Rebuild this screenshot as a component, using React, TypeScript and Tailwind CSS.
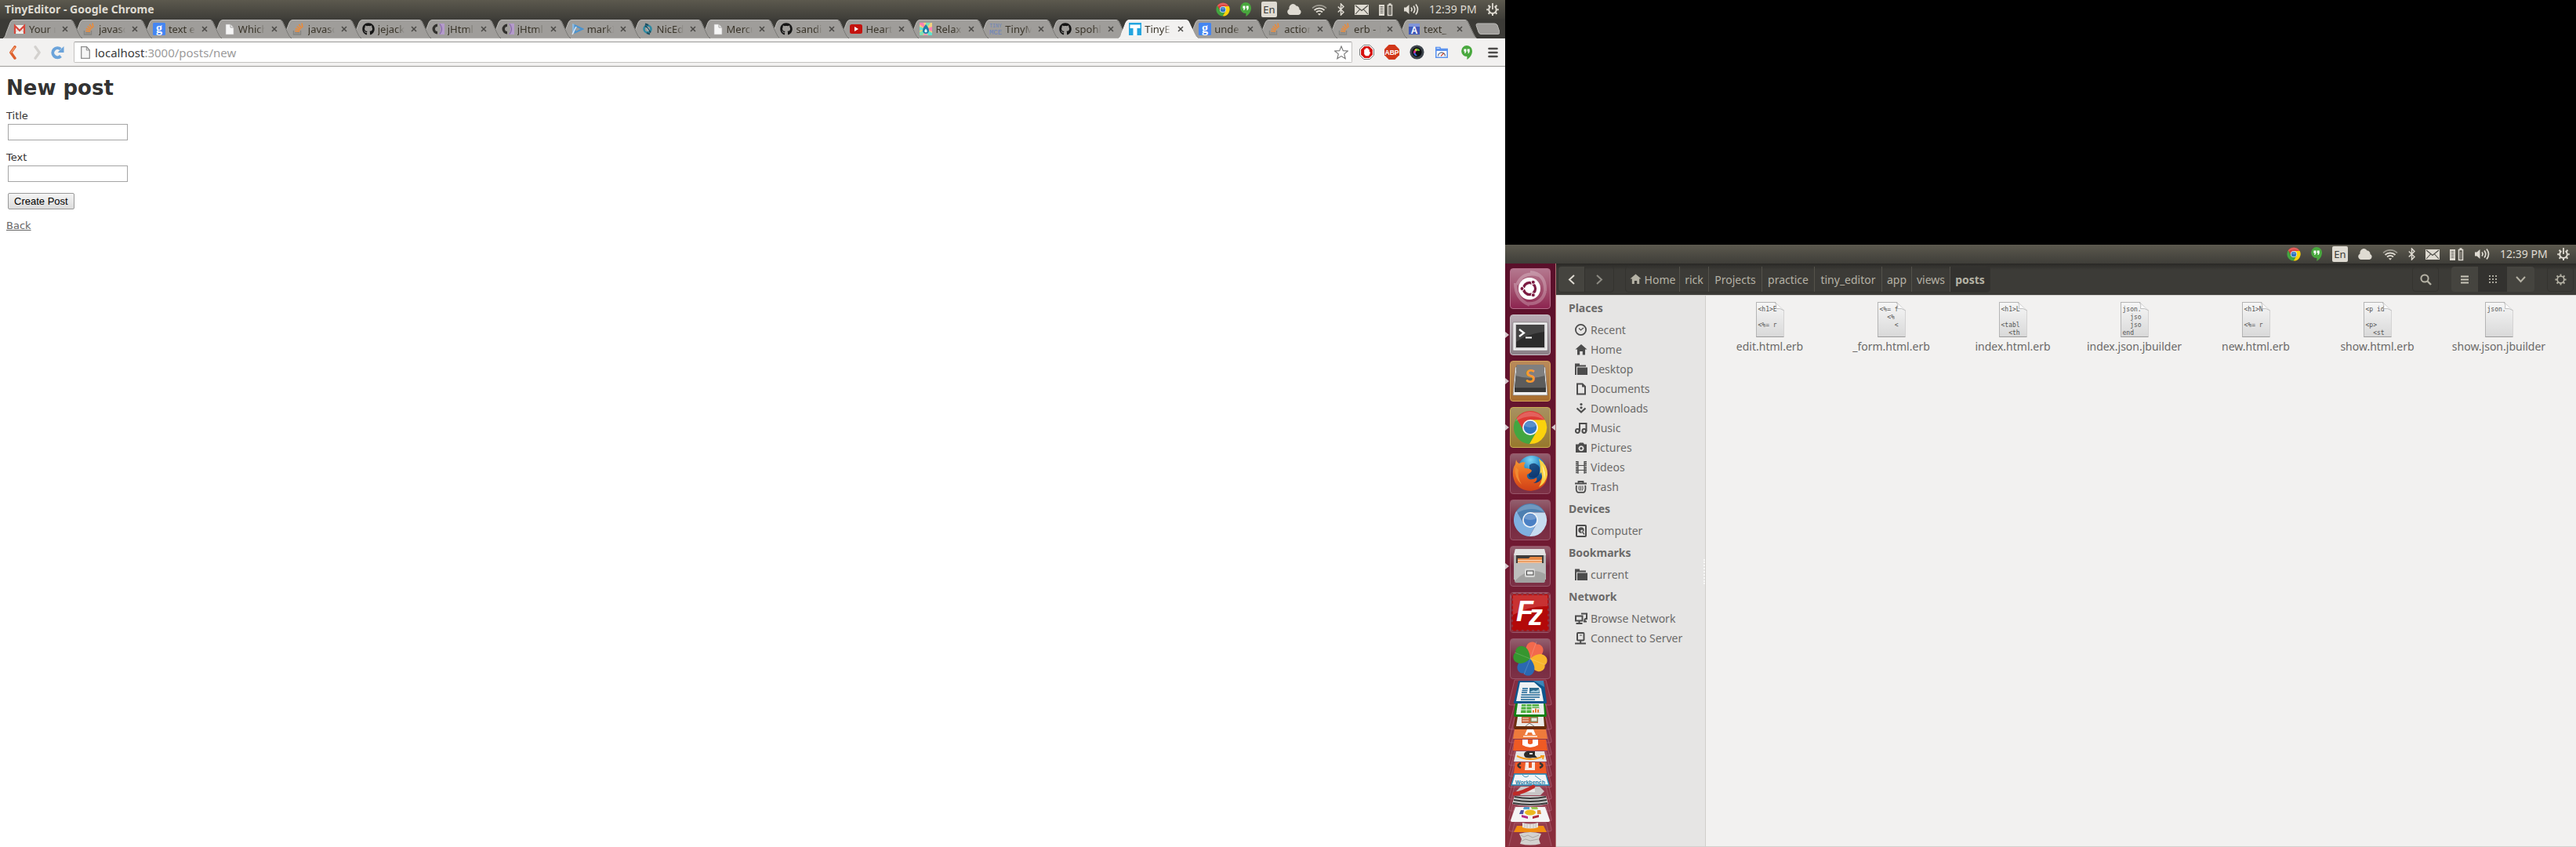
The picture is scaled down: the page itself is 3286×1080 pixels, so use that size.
import React from "react";
import { FaGithub } from "react-icons/fa";

type Kids = { children: React.ReactNode };

/* ---------- shared logos ---------- */

function ChromeLogo({ size, chromium = false }: { size: number; chromium?: boolean }) {
  const c = chromium
    ? { top: "#4d7fb0", right: "#c6dcf0", left: "#7fb0e0", dot: "#4a80c4" }
    : { top: "#dd3a35", right: "#fbd20c", left: "#43a640", dot: "#2f74c0" };
  return (
    <svg width={size} height={size} viewBox="1 1 46 46" aria-hidden="true">
      <path d="M5.55 12.02A22 22 0 0 1 43.6 14H24V24L15.34 29Z" fill={c.top} />
      <path d="M43.6 14A22 22 0 0 1 22.85 45.97L32.66 29L24 24V14Z" fill={c.right} />
      <path d="M22.85 45.97A22 22 0 0 1 5.55 12.02L15.34 29L24 24L32.66 29Z" fill={c.left} />
      <path d="M4 16A22 22 0 0 1 43 14Q24 4 4 16Z" fill="#fff" opacity=".2" />
      <circle cx="24" cy="24" r="10.4" fill="#eef3f8" />
      <circle cx="24" cy="24" r="8.6" fill={c.dot} />
      <path d="M16 22a8.4 8.4 0 0 1 16 0q-8 4-16 0Z" fill="#fff" opacity=".2" />
    </svg>
  );
}

function Hangouts({ h = 18 }: { h?: number }) {
  return (
    <svg width="14" height={h} viewBox="0 0 14 18" aria-hidden="true">
      <path d="M7 0a7 7 0 0 1 7 7c0 5-3 8.400-6.600 11V14.100A7 7 0 1 1 7 0Z" fill="#49a83e" />
      <path d="M3.400 4.600h3v3.200L5.200 10H4l.8-2.200H3.400ZM7.700 4.600h3v3.200L9.500 10H8.300l.8-2.200H7.700Z" fill="#fff" />
    </svg>
  );
}

/* ---------- desktop panel ---------- */

const cream = "#dfdbd2";

function Gear({ size, color }: { size: number; color: string }) {
  return (
    <svg width={size} height={size} viewBox="0 0 16 16" fill="none" stroke={color} aria-hidden="true">
      <circle cx="8" cy="8" r="4.600" strokeWidth="1.800" />
      <path
        d="M8 .5v2.500M8 13v2.500M.5 8H3M13 8h2.500M2.700 2.700l1.800 1.800M11.500 11.500l1.800 1.800M2.700 13.300l1.800-1.800M11.500 4.500l1.800-1.800"
        strokeWidth="2"
      />
    </svg>
  );
}

function Tray() {
  return (
    <div className="flex items-center gap-[13px] pr-2">
      <ChromeLogo size={18} />
      <Hangouts />
      <span className="flex h-5 w-5 items-center justify-center rounded-xs bg-[#dfdbd2] text-[13px] leading-none text-[#3c3b37]">
        En
      </span>
      <svg width="18" height="16" viewBox="0 0 18 16" fill={cream} aria-hidden="true">
        <path d="M4 15a4 4 0 0 1-1.500-7.600A5.500 5.500 0 0 1 7 1a4.500 4.500 0 0 1 4.500 2.600A4 4 0 0 1 15.500 8 3.700 3.700 0 0 1 14.500 15Z" />
      </svg>
      <svg width="20" height="16" viewBox="0 0 20 16" fill="none" stroke={cream} aria-hidden="true">
        <path d="M1 6.500a13 13 0 0 1 18 0" strokeWidth="1.600" opacity=".55" />
        <path d="M3.500 9a9.500 9.500 0 0 1 13 0" strokeWidth="1.900" />
        <path d="M6 11.500a6 6 0 0 1 8 0" strokeWidth="1.900" />
        <path d="M7.800 13.200h4.400l-2.200 2.500Z" fill={cream} stroke="none" />
      </svg>
      <svg width="9" height="16" viewBox="0 0 9 16" fill="none" stroke={cream} strokeWidth="1.500" aria-hidden="true">
        <path d="M.8 4.500l7.200 7L4.500 15V1L8 4.500l-7.200 7" />
      </svg>
      <svg width="18" height="13" viewBox="0 0 18 13" aria-hidden="true">
        <path d="M0 0h18v13H0Z" fill={cream} />
        <path d="M1 1l8 6.500L17 1M1 12l5.500-6M17 12l-5.500-6" fill="none" stroke="#4a4944" strokeWidth="1.100" />
      </svg>
      <svg width="18" height="17" viewBox="0 0 18 17" aria-hidden="true">
        <path d="M0 2h7v14H0Z" fill={cream} />
        <path d="M2 4v10M3.500 4v10M5 4v10" stroke="#4a4944" strokeDasharray="1 1" />
        <path d="M11.500 2.500h5v13h-5ZM12.500 1h3" fill="none" stroke={cream} strokeWidth="1.500" />
        <path d="M12.800 5h2.400v9h-2.400Z" fill={cream} opacity=".35" />
      </svg>
      <svg width="20" height="16" viewBox="0 0 20 16" fill="none" stroke={cream} strokeWidth="1.700" aria-hidden="true">
        <path d="M1 5.500h2.500L7.500 2v12l-4-3.500H1Z" fill={cream} stroke="none" />
        <path d="M10 5.500q2 2.500 0 5M13 3.500q3.500 4.500 0 9M16 1.500q5 6.500 0 13" />
      </svg>
      <span className="w-[60px] text-[14px] leading-none whitespace-nowrap">12:39 PM</span>
      <svg width="16" height="16" viewBox="0 0 16 16" fill="none" stroke={cream} aria-hidden="true">
        <path d="M5.500 4.200a4.800 4.800 0 1 0 5 0" strokeWidth="2" />
        <path d="M8 0v8" strokeWidth="1.800" />
        <path d="M.2 8.300h2.500M13.300 8.300h2.500M2.500 2.800l1.700 1.700M11.800 4.500l1.700-1.700M2.600 13.700l1.700-1.700M11.700 12l1.700 1.700M8 13.500V16" strokeWidth="2" />
      </svg>
    </div>
  );
}

function Panel({ title }: { title?: string }) {
  return (
    <div className="flex h-6 shrink-0 items-center justify-between bg-linear-to-b from-[#5c594e] to-[#3f3e39] text-[#dfdbd2]">
      <span className="pl-1.5 text-[14px] leading-none font-bold">{title}</span>
      <Tray />
    </div>
  );
}

/* ---------- browser favicons ---------- */

function Fav({ children }: Kids) {
  return (
    <svg width="16" height="16" viewBox="0 0 16 16" className="shrink-0" aria-hidden="true">
      {children}
    </svg>
  );
}

const favicons = {
  gmail: (
    <Fav>
      <path d="M1 3h14v11H1Z" fill="#f1eeea" />
      <path d="M1 14l5-5.500M15 14l-5-5.500" stroke="#cfc9c2" />
      <path d="M2 14V4l6 6 6-6v10" fill="none" stroke="#d8473b" strokeWidth="2.200" />
    </Fav>
  ),
  stack: (
    <Fav>
      <path d="M1.500 10v5h9v-5" fill="none" stroke="#858480" strokeWidth="1.400" />
      <path d="M3 12.800h6" stroke="#858480" strokeWidth="1.300" />
      <path d="M3.200 10.500l6 .6M3.800 7.500l5.800 1.800M5.600 4.500l4.900 3.600M8.200 2l3.600 5M12 .5l1 5.500" stroke="#ee8a35" strokeWidth="1.500" />
    </Fav>
  ),
  google: (
    <Fav>
      <rect width="16" height="16" rx="1.500" fill="#4586f2" />
      <text x="8" y="12" textAnchor="middle" fontSize="16" fontWeight="700" fontFamily="Liberation Serif, serif" fill="#fff">g</text>
    </Fav>
  ),
  file: (
    <Fav>
      <path d="M4 2h6l4 4v9H4Z" fill="#f6f6f6" stroke="#b5b4b2" strokeWidth=".6" />
      <path d="M10 2v4h4" fill="none" stroke="#a3a2a0" />
    </Fav>
  ),
  github: <FaGithub size={16} color="#161616" className="shrink-0" aria-hidden="true" />,
  jhtml: (
    <Fav>
      <path d="M7 1.500v3.500a3 3 0 0 0 0 6v3.500a6.500 6.500 0 0 1 0-13Z" fill="#33322f" />
      <path d="M9 1h7v14H9q4-7 0-14Z" fill="#b49acb" />
      <path d="M10 1.500q5 6.500 0 13" fill="none" stroke="#7d5f9e" />
    </Fav>
  ),
  mark: (
    <Fav>
      <path d="M1 1l3 1v10l-3 3Z" fill="#8fb8dc" />
      <path d="M4.500 3.500L14 8l-9.500 4.500Z" fill="none" stroke="#4a93cf" strokeWidth="2" />
      <path d="M1 15L6 5" stroke="#d8e7f4" strokeWidth="1.500" />
    </Fav>
  ),
  nic: (
    <Fav>
      <circle cx="8" cy="8" r="4.500" fill="none" stroke="#2c8aa3" strokeWidth="2.500" />
      <path d="M5 3.500l7 9M5 1.500l4 1.500M11 14.500l-4-1.500" stroke="#1c4d60" strokeWidth="2" />
      <path d="M6.500 6.500l3 4" stroke="#d6eef3" />
    </Fav>
  ),
  youtube: (
    <Fav>
      <rect y="2" width="16" height="12" rx="2.500" fill="#c4130f" />
      <path d="M6 5v6l5-3Z" fill="#fff" />
    </Fav>
  ),
  relax: (
    <Fav>
      <path d="M0 0h16v16H0Z" fill="#f3d17c" />
      <path d="M8 8L0 2V0h5ZM8 8l8-3v6Z" fill="#ff7fb0" />
      <path d="M8 8V0h6ZM8 8L4 16H0v-4Z" fill="#7fe0b4" />
      <path d="M8 8L0 5v5ZM8 8l8 5v3h-5Z" fill="#5fe3d2" />
      <path d="M8 8l2 8H5Z" fill="#ff9ac0" />
      <path d="M8 2q-5 6-4 9 1 3 4 3t4-3q1-3-4-9Z" fill="#1e7fa8" />
      <path d="M8 7.500q-2.500 3-1.300 4.200 1.300 1 2.600 0Q10.500 10.500 8 7.500Z" fill="#e8fbff" />
    </Fav>
  ),
  mce: (
    <Fav>
      <g fontFamily="Liberation Mono, monospace" textAnchor="middle" fill="#6c84be">
        <text x="8" y="6" fontSize="6.500">TINY</text>
        <text x="8" y="14.500" fontSize="9">MCE</text>
      </g>
    </Fav>
  ),
  tiny: (
    <Fav>
      <path d="M0 0h16v16H0Z" fill="#25a5df" />
      <path d="M1.500 2.500h13V7h-4v9h-5V7h-4Z" fill="#fff" />
    </Fav>
  ),
  api: (
    <Fav>
      <path d="M1 1h14v14H1Z" fill="#4058b8" />
      <path d="M1 1h14v4H1Z" fill="#8094d8" />
      <text x="8" y="13.500" textAnchor="middle" fontSize="12" fontWeight="700" fontFamily="Liberation Sans, sans-serif" fill="#fff">A</text>
    </Fav>
  ),
};

const tabs: [keyof typeof favicons, string][] = [
  ["gmail", "Your n"], ["stack", "javasc"], ["google", "text e"], ["file", "Which"], ["stack", "javasc"],
  ["github", "jejack"], ["jhtml", "jHtml"], ["jhtml", "jHtml"], ["mark", "markI"], ["nic", "NicEd"],
  ["file", "Mercu"], ["github", "sandi"], ["youtube", "Heart"], ["relax", "Relax"], ["mce", "TinyM"],
  ["github", "spohl"], ["tiny", "TinyE"], ["google", "unde"], ["stack", "action"], ["stack", "erb - H"], ["api", "text_"],
];
const activeTab = 16;

function Tab({ icon, label, index }: { icon: keyof typeof favicons; label: string; index: number }) {
  const active = index === activeTab;
  return (
    <div className="relative h-6 min-w-0 flex-1" style={{ zIndex: active ? 40 : 30 - index }}>
      <svg className="absolute top-0 left-0 h-6 w-[calc(100%+12px)]" viewBox="0 0 101 24" preserveAspectRatio="none" aria-hidden="true">
        <path
          d="M0 24C3 22 3 20 4 17L9 4Q10.500 .5 13 .5H86Q89 .5 90 4L96 17Q98 22 101 24Z"
          fill={active ? "#f2f1f0" : "#9f9d9a"}
          stroke={active ? "#f8f8f8" : "#c0bfbc"}
        />
        {!active && <path d="M87 .8Q89 1 90 4L96 17Q98 22 101 24" fill="none" stroke="#6d6c69" />}
      </svg>
      <div className="relative flex h-full items-center pr-1.5 pl-[13px]">
        {favicons[icon]}
        <span className="ml-1 min-w-0 flex-1 overflow-hidden text-[13px] leading-5 whitespace-nowrap text-[#3a352a] [mask-image:linear-gradient(to_right,black_70%,transparent)]">
          {label}
        </span>
        <button type="button" aria-label={`Close ${label}`} className="ml-2 shrink-0">
          <svg width="8" height="8" viewBox="0 0 8 8" fill="none" stroke="#4a4946" strokeWidth="1.500" aria-hidden="true">
            <path d="M1 1l6 6M7 1l-6 6" />
          </svg>
        </button>
      </div>
    </div>
  );
}

function ToolButton({ label, children }: { label: string } & Kids) {
  return (
    <button type="button" aria-label={label} className="flex h-7 w-8 shrink-0 items-center justify-center">
      {children}
    </button>
  );
}

function Toolbar() {
  return (
    <div className="flex h-9 items-center border-b border-[#9d9c9a] bg-[#f2f1f0]">
      <ToolButton label="Back">
        <svg width="10" height="18" viewBox="0 0 10 18" aria-hidden="true">
          <path d="M8 1.800L2.800 9 8 16.200" fill="none" stroke="#dd5f2c" strokeWidth="3.400" strokeLinecap="round" strokeLinejoin="round" />
          <path d="M7.600 2.500L3 9" fill="none" stroke="#f3a070" strokeWidth="1.300" strokeLinecap="round" />
        </svg>
      </ToolButton>
      <ToolButton label="Forward">
        <svg width="10" height="18" viewBox="0 0 10 18" aria-hidden="true">
          <path d="M2 1.800L7.200 9 2 16.200" fill="none" stroke="#d3d1ce" strokeWidth="3.200" strokeLinecap="round" strokeLinejoin="round" />
        </svg>
      </ToolButton>
      <button type="button" aria-label="Reload" className="flex h-7 w-[30px] shrink-0 items-center justify-end pr-3">
        <svg width="17" height="18" viewBox="0 0 17 18" className="shrink-0" aria-hidden="true">
          <path d="M12.500 13.500A6 6 0 1 1 12.300 4.700" fill="none" stroke="#6ba3da" strokeWidth="4" />
          <path d="M16.500 1v8H8.500Z" fill="#6ba3da" />
        </svg>
      </button>
      <div className="flex h-[27px] min-w-0 flex-1 items-center rounded-xs border border-[#c4c2c0] border-t-[#9b9a98] bg-white pr-1 pl-2">
        <svg width="12" height="16" viewBox="0 0 12 16" className="shrink-0" aria-hidden="true">
          <path d="M.7.7h6.800L11.300 5v10.300H.7Z" fill="#f6f6f6" stroke="#8f8f8f" strokeWidth="1.300" />
          <path d="M7.300.7V5h4" fill="none" stroke="#8f8f8f" />
        </svg>
        <div className="ml-1.5 flex-1 text-[15px] leading-6 text-[#9b9b9b]">
          <span className="text-[#3a3a3a]">localhost</span>:3000/posts/new
        </div>
        <button type="button" aria-label="Bookmark this page">
          <svg width="18" height="18" viewBox="0 0 18 18" aria-hidden="true">
            <path d="M9 1l2.300 5.600 6 .4-4.600 3.900 1.500 5.900L9 13.600l-5.200 3.200 1.500-5.900L.7 7l6-.4Z" fill="#fff" stroke="#777" strokeWidth="1.100" />
          </svg>
        </button>
      </div>
      <div className="flex shrink-0 items-center pl-0.5">
        <ToolButton label="AdBlock">
          <svg width="19" height="19" viewBox="0 0 20 20" aria-hidden="true">
            <path d="M6 .5h8L19.500 6v8L14 19.500H6L.5 14V6Z" fill="#fff" stroke="#6e6e6e" />
            <path d="M6.700 2.200h6.600l4.500 4.500v6.600l-4.500 4.500H6.700l-4.500-4.500V6.700Z" fill="#d5110e" />
            <path d="M6.500 9.500V6.500h1.400V5h1.500V4.500h1.500V5h1.300v1.500h1.300V10l1-.5v2L12.500 15h-4L6.500 12.500Z" fill="#fff" />
          </svg>
        </ToolButton>
        <ToolButton label="Adblock Plus">
          <svg width="19" height="19" viewBox="0 0 20 20" aria-hidden="true">
            <path d="M6 0h8l6 6v8l-6 6H6l-6-6V6Z" fill="#d13719" />
            <text x="10" y="13.300" textAnchor="middle" fontSize="9" fontWeight="700" fontFamily="Liberation Sans, sans-serif" fill="#fff">ABP</text>
          </svg>
        </ToolButton>
        <ToolButton label="Screen capture">
          <svg width="19" height="19" viewBox="0 0 20 20" aria-hidden="true">
            <circle cx="10" cy="10" r="9.500" fill="#3c434b" />
            <circle cx="10" cy="10" r="6.500" fill="#0b0d12" />
            <path d="M10 10L6.500 7A5 5 0 0 1 10 5Z" fill="#e2d338" />
            <path d="M10 10V5a5 5 0 0 1 4 2.500Z" fill="#63c437" />
            <path d="M10 10L6.500 7a5 5 0 0 0-1 5Z" fill="#d92f8b" />
            <path d="M10 10l-4.500 2a5 5 0 0 0 4.500 3Z" fill="#3468e0" />
            <circle cx="11" cy="11" r="2.800" fill="#111" />
          </svg>
        </ToolButton>
        <ToolButton label="Speed test">
          <svg width="16" height="15" viewBox="0 0 16 15" aria-hidden="true">
            <path d="M.8 1.500h5l1 2h8.400v10.700H.8Z" fill="#fff" stroke="#5c93ee" strokeWidth="1.600" />
            <path d="M1 3h14v3H1Z" fill="#5c93ee" />
            <path d="M3.500 12.500a4.500 4.500 0 0 1 9 0" fill="none" stroke="#6b7a90" strokeWidth="1.400" />
            <path d="M7 12.500l4-4" stroke="#cc4b3b" strokeWidth="1.300" />
          </svg>
        </ToolButton>
        <ToolButton label="Hangouts">
          <Hangouts />
        </ToolButton>
      </div>
      <button type="button" aria-label="Menu" className="mr-[9px] ml-[11px] shrink-0">
        <svg width="13" height="14" viewBox="0 0 13 14" stroke="#4c4b49" strokeWidth="2.600" strokeLinecap="round" aria-hidden="true">
          <path d="M1.500 2h10M1.500 7h10M1.500 12h10" />
        </svg>
      </button>
    </div>
  );
}

function Browser() {
  return (
    <section className="flex min-w-0 flex-col bg-white">
      <Panel title="TinyEditor - Google Chrome" />
      <div className="isolate flex h-[25px] items-end bg-[#3c3b37] pl-1">
        {tabs.map(([icon, label], i) => (
          <Tab key={i} icon={icon} label={label} index={i} />
        ))}
        <button type="button" aria-label="New tab" className="mr-[7px] ml-2.5 flex h-full shrink-0 items-center">
          <svg width="31" height="16" viewBox="0 0 31 16" aria-hidden="true">
            <path d="M3 1h21q3 0 4 2l3 9q0 2.500-2 2.500H7q-2 0-3-2.500L1 3Q1 1 3 1Z" fill="#9f9d9a" stroke="#bab9b6" />
          </svg>
        </button>
      </div>
      <Toolbar />
      <main className="px-2 font-['DejaVu_Sans',sans-serif] text-[13px] leading-[18px] text-[#333]">
        <h1 className="my-[18px] text-[26px] leading-[18px] font-bold">New post</h1>
        <form onSubmit={(e) => e.preventDefault()}>
          <div className="flex flex-col items-start">
            <label htmlFor="post-title">Title</label>
            <input id="post-title" type="text" className="mt-px ml-0.5 h-[21px] w-[153px] border border-[#a5a5a5] bg-white px-0.5" />
          </div>
          <div className="mt-[13px] flex flex-col items-start">
            <label htmlFor="post-text">Text</label>
            <input id="post-text" type="text" className="mt-px ml-0.5 h-[21px] w-[153px] border border-[#a5a5a5] bg-white px-0.5" />
          </div>
          <button
            type="submit"
            className="mt-3.5 ml-0.5 h-[21px] rounded-xs border border-[#999] bg-linear-to-b from-[#f4f4f4] to-[#dcdcdc] px-[7px] font-['Liberation_Sans',sans-serif] text-[13px] leading-[17px] text-black"
          >
            Create Post
          </button>
        </form>
        <a href="#back" className="mt-3 inline-block text-[#666] underline">Back</a>
      </main>
    </section>
  );
}

/* ---------- launcher ---------- */

const tileTints = {
  bfb: "from-[#b4788f] to-[#8d2450] border-[#b86f8c]",
  grey: "from-[#b9adb5] to-[#8b8087] border-[#c8bfc5]",
  amber: "from-[#b98a5a] to-[#a96e2e] border-[#d3a35a]",
  gold: "from-[#a89160] to-[#97792c] border-[#c9ad54]",
  wine: "from-[#93606f] via-[#74273f] to-[#7d3146] border-[#99566a]",
};

function Tile({ label, tint, running, focused, children }: { label: string; tint: keyof typeof tileTints; running?: boolean; focused?: boolean } & Kids) {
  return (
    <div className="relative flex w-full justify-center">
      {running && (
        <svg width="5" height="8" viewBox="0 0 5 8" className="absolute top-[22px] left-0" aria-hidden="true">
          <path d="M0 0l5 4-5 4Z" fill="#d6c8cd" />
        </svg>
      )}
      <button type="button" aria-label={label} className={`flex h-[52px] w-[52px] items-center justify-center rounded-sm border bg-linear-to-b ${tileTints[tint]}`}>
        {children}
      </button>
      {focused && (
        <svg width="5" height="8" viewBox="0 0 5 8" className="absolute top-[22px] right-0" aria-hidden="true">
          <path d="M5 0L0 4l5 4Z" fill="#d6c8cd" />
        </svg>
      )}
    </div>
  );
}

function Art({ children }: Kids) {
  return (
    <svg width="50" height="50" viewBox="0 0 50 50" aria-hidden="true">
      {children}
    </svg>
  );
}

const petal = "M0 0C-8 -4 -12 -9 -11 -15C-10 -21 -3 -23 0 -20C3 -23 10 -21 11 -15C12 -9 8 -4 0 0Z";

function FoldedIcons() {
  const glass = [0, 31, 48, 64, 77, 91, 105, 120, 135, 148, 161, 182];
  return (
    <svg width="64" height="213" viewBox="0 0 64 213" className="shrink-0" aria-label="More applications" role="img">
      {glass.map((y) => (
        <path key={y} d={`M12 ${y + 1}H52L59 ${y + 30}Q60 ${y + 33} 57 ${y + 33}H7Q4 ${y + 33} 5 ${y + 30}Z`} fill="#a8566a" fillOpacity=".22" stroke="#b97688" strokeOpacity=".5" />
      ))}
      <path d="M17 2h24l9 4 3 24q0 1-2 1H13q-2 0-2-1Z" fill="#0e568c" />
      <path d="M19 4h18l9 8 3 16H14Z" fill="#eef1f3" />
      <path d="M36 2h13l1 8Z" fill="#3b86b8" />
      <path d="M22 12h7M21.500 14.500h7M21 17h7M20.500 20h24M20 23h24M20 26h18" stroke="#1a6495" strokeWidth="1.300" />
      <path d="M31 11h12l1 7H31Z" fill="#2c6a8d" />
      <path d="M32 16l4-2 3 1 4-2v4H32Z" fill="#9bc4d8" />
      <path d="M13 31h38l2 15q0 2-2 2H13q-2 0-2-2Z" fill="#138013" />
      <path d="M16 31h33l1 14H14Z" fill="#eef1ee" />
      <path d="M21 32h22l1 11H20Z" fill="#4caf3d" />
      <path d="M20 35h24M20 39h24M27 31v13M34 31v13" stroke="#e7f4e4" />
      <path d="M34 37h10v6H34Z" fill="#fff" stroke="#bbb" strokeWidth=".5" />
      <path d="M36 42.500v-3M39 42.500v-5M42 42.500v-4" stroke="#e0762b" strokeWidth="2" />
      <path d="M13 48h38l2 13q0 3-2 3H13q-2 0-2-3Z" fill="#6b2c0c" />
      <path d="M16 48h33l1 12H14Z" fill="#eceae8" />
      <path d="M21 48h21v8H21Z" fill="#c7643c" />
      <path d="M22 50h8M22 53h8" stroke="#f4d9cc" />
      <path d="M33 49h8v5h-8Z" fill="#e9e6df" stroke="#6d8b52" />
      <path d="M31 56l-5 4M31 56l6 4" stroke="#777" />
      <path d="M12 64h40l2 12H10Z" fill="#ee7a3c" />
      <path d="M25 71l3-7h8l3 7h-4l-1-3h-5l-1 3Z" fill="#fff" />
      <path d="M23 72h18v2H23Z" fill="#fbd5bf" />
      <path d="M12 77h40l2 14H10Z" fill="#ef5a24" />
      <path d="M22 77h7v5q3 2 6 0v-5h7v7q-10 6-20 0Z" fill="#fff" />
      <path d="M14 92h36l3 13H11Z" fill="#e6e5e4" />
      <path d="M24 96q1-5 8-4h6v5l3 3h-6q-11 2-11-4Z" fill="#2b2a2a" />
      <path d="M31 94h4v2h-4Z" fill="#e6e5e4" />
      <path d="M15 98q17 8 34 0M45 98h4l-1 4" fill="none" stroke="#f69a1c" strokeWidth="2" />
      <path d="M13 106h38l2 14H11Z" fill="#ee5a26" />
      <path d="M26 106h12v10H25Z" fill="#f8e9e2" />
      <path d="M30 106h4v7h-4Z" fill="#e8551f" />
      <path d="M20 107q-7 3 0 6M44 107q7 3 0 6" stroke="#333" strokeWidth="2.500" fill="none" />
      <path d="M12 121h40l4 14H8Z" fill="#f2f4f6" stroke="#2289b6" strokeWidth="1.500" />
      <path d="M22 122q4 5 8 1M38 123l8 6" stroke="#4793b5" fill="none" />
      <text x="32" y="134" textAnchor="middle" fontSize="7" fontWeight="700" fontFamily="Liberation Sans, sans-serif" fill="#267ea6">Workbench</text>
      <path d="M20 137h24l6 6-5 5H20l-6-5Z" fill="#c8c6c6" />
      <path d="M24 140h14v4H24Z" fill="#e7e6e6" />
      <path d="M12 146q10-1 24-9" stroke="#c02a26" strokeWidth="4.500" strokeLinecap="round" fill="none" />
      <path d="M12 149h40l3 10q-23 6-46 0Z" fill="#c9c9c8" />
      <path d="M12 150q20 4 40 0M11 154q21 4 42 0M10 158q22 4 44 0" stroke="#3a3a3a" strokeWidth="2" fill="none" />
      <path d="M13 163h38l6 17q0 2-3 2H9q-2 0-2-2Z" fill="#f4f4f4" />
      <ellipse cx="32" cy="170" rx="7" ry="3.500" fill="#ecb91f" />
      <path d="M24 163h7v3h-8Z" fill="#4fa3cf" />
      <path d="M33 163h8l1 3h-8Z" fill="#9bcb52" />
      <path d="M20 167h4l-1 5h-5Z" fill="#4e51a3" />
      <path d="M41 167h4l1 5h-5Z" fill="#dd8a3a" />
      <path d="M21 173l8 2v3l-8-2Z" fill="#b72b87" />
      <path d="M43 173l-8 2v3l8-2Z" fill="#b02a3b" />
      <path d="M15 187h34l4 8H11Z" fill="#f08c10" />
      <path d="M22 183q10 3 20 0v6q-10 3-20 0Z" fill="#e4e1dd" />
      <path d="M25 184v5M28 185v5M32 185v5M36 185v5M39 184v5" stroke="#b9b5b0" strokeWidth=".8" />
      <path d="M18 197q14-4 28 0l-3 7 2 6q-13 3-26 0l2-6Z" fill="#d4d2cf" />
      <path d="M20 199l4 2 5-2 6 3 8-3M20 207l6-3 6 2 10-2" stroke="#aaa7a3" fill="none" />
    </svg>
  );
}

function Launcher() {
  return (
    <nav aria-label="Launcher" className="flex w-[65px] shrink-0 flex-col gap-[7px] overflow-hidden border-r border-[#b07070] bg-linear-to-b from-[#5a0f2a] via-[#711a32] to-[#8a2e3c] pt-1.5">
      <Tile label="Search" tint="bfb">
        <Art>
          <path d="M25 4Q45 6 44 28M44 28Q40 46 20 44M6 18Q6 38 24 46M8 20Q16 2 36 8" fill="none" stroke="#fff" strokeOpacity=".25" strokeWidth="4" />
          <circle cx="24" cy="25" r="14" fill="#fff" />
          <circle cx="24" cy="25" r="7.500" fill="none" stroke="#7c1b42" strokeWidth="3.400" />
          <path d="M24 25H12M24 25l6-10.400M24 25l6 10.400" stroke="#fff" strokeWidth="1.300" />
          <circle cx="24" cy="25" r="5.600" fill="#fff" />
          <g fill="#7c1b42" stroke="#fff" strokeWidth="1">
            <circle cx="14.500" cy="25" r="2.500" />
            <circle cx="28.800" cy="16.800" r="2.500" />
            <circle cx="28.800" cy="33.200" r="2.500" />
          </g>
        </Art>
      </Tile>
      <Tile label="Terminal" tint="grey" running>
        <Art>
          <path d="M3 9h44v36H3Z" fill="#c9c7c9" stroke="#8a8689" />
          <path d="M4.500 10.500h41v33h-41Z" fill="none" stroke="#f1f1f1" strokeWidth="2" />
          <path d="M7 12h36v29H7Z" fill="#2b2b2b" />
          <path d="M7 12h36v9Q20 24 7 34Z" fill="#555" opacity=".6" />
          <path d="M11 18l6 4.500-6 4.500" fill="none" stroke="#fff" strokeWidth="2.200" />
          <path d="M19 28.500h8" stroke="#fff" strokeWidth="2" />
        </Art>
      </Tile>
      <Tile label="Sublime Text" tint="amber" running>
        <Art>
          <path d="M6 7h38l3 36H3Z" fill="#f0f0f0" stroke="#777" strokeWidth=".6" />
          <path d="M8 4h34l3 30v5H5v-5Z" fill="#383838" />
          <path d="M8 4h34l3 30H5Z" fill="#5c5c5c" />
          <path d="M8 4h34l1.500 14Q25 24 6.500 18Z" fill="#8e8e8e" opacity=".7" />
          <path d="M5 34h40" stroke="#2e2e2e" />
          <text x="25" y="27" textAnchor="middle" fontSize="23" fontWeight="700" fontFamily="Lato, sans-serif" fill="#f99a2d">S</text>
        </Art>
      </Tile>
      <Tile label="Google Chrome" tint="gold" running focused>
        <ChromeLogo size={44} />
      </Tile>
      <Tile label="Firefox" tint="wine">
        <Art>
          <defs>
            <linearGradient id="fox" x1="0" y1="0" x2="0" y2="1">
              <stop offset="0" stopColor="#f39a34" />
              <stop offset=".5" stopColor="#e7641f" />
              <stop offset="1" stopColor="#cf4018" />
            </linearGradient>
            <radialGradient id="globe" cx=".45" cy=".15" r=".9">
              <stop offset="0" stopColor="#7fd6f5" />
              <stop offset=".4" stopColor="#2a8cc9" />
              <stop offset="1" stopColor="#0a2a66" />
            </radialGradient>
          </defs>
          <circle cx="27" cy="20" r="18" fill="url(#globe)" />
          <path d="M24 14q5-4 9-1 6 3 4 11-3 8-12 6-4-3-1-8Z" fill="#0b2a60" opacity=".7" />
          <path d="M7 7Q8 11 11 12Q15 9 19 11Q16 14 18 18Q25 18 27 21Q26 24 21 26Q20 30 24 32Q29 33 33 30Q35 34 29 37Q38 37 41 28Q43 18 37 8Q46 14 47 25Q47 44 26 47Q6 46 3 28Q2 18 6 13Z" fill="url(#fox)" />
          <path d="M36 6Q47 13 47 26Q45 37 36 42Q42 32 39 23L37 26Q39 15 36 6Z" fill="#fbd045" />
          <path d="M40 14Q45 22 43 32Q42 21 40 14Z" fill="#fff6b8" />
          <path d="M6 16Q4 30 14 39Q8 28 10 20Q8 18 6 16Z" fill="#f08a32" />
        </Art>
      </Tile>
      <Tile label="Chromium" tint="wine">
        <ChromeLogo size={44} chromium />
      </Tile>
      <Tile label="Files" tint="wine" running>
        <Art>
          <path d="M6 3h37l2 8v31H4V11Z" fill="#b5b5b4" />
          <path d="M6 3h37l2 8H4Z" fill="#e2e2e1" />
          <path d="M7 11h35v10H7Z" fill="#3e3c3a" />
          <path d="M9 15h14l2-2h15v8H9Z" fill="#e88a45" />
          <path d="M9 17.500h31M9 20h31" stroke="#fbe3cf" strokeWidth="1.200" />
          <path d="M5 21h39v22q0 3-2 3H7q-2 0-2-3Z" fill="#a2a2a1" />
          <path d="M5 21h39v14Q24 24 5 44Z" fill="#bebebd" />
          <rect x="18" y="28" width="13" height="11" rx="2" fill="#d7d7d6" />
          <rect x="20.500" y="31" width="8.500" height="5" fill="#e9e9e8" stroke="#444" />
        </Art>
      </Tile>
      <Tile label="FileZilla" tint="wine">
        <Art>
          <path d="M1.500 1.500h47v47h-47Z" fill="#b30909" />
          <path d="M1.500 1.500h47v47h-47Z" fill="none" stroke="#8e3340" strokeWidth="3.500" strokeLinecap="round" strokeDasharray="0 6.700" />
          <path d="M3 3h44v14Q25 16 3 28Z" fill="#d64f4f" opacity=".6" />
          <text x="7" y="36" fontSize="36" fontStyle="italic" fontWeight="700" fontFamily="Liberation Sans, sans-serif" fill="#fff">
            F<tspan dx="-6" dy="5" fontSize="36">z</tspan>
          </text>
        </Art>
      </Tile>
      <div>
        <Tile label="PlayOnLinux" tint="wine">
          <Art>
            <path d={petal} transform="translate(25 25) rotate(25)" fill="#f2694d" />
            <path d={petal} transform="translate(25 25) rotate(113)" fill="#f8b52c" />
            <path d={petal} transform="translate(25 25) rotate(205)" fill="#2b68b2" />
            <path d={petal} transform="translate(25 25) rotate(293)" fill="#36962f" />
            <path d="M25 25L33 3M25 25L45 33M25 25L17 45M25 25L5 17" stroke="#fff" strokeOpacity=".18" />
          </Art>
        </Tile>
        <FoldedIcons />
      </div>
    </nav>
  );
}

/* ---------- file manager ---------- */

function Sym({ children }: Kids) {
  return (
    <svg width="16" height="16" viewBox="0 0 16 16" fill="none" stroke="#4c4c4c" strokeWidth="1.800" className="shrink-0" aria-hidden="true">
      {children}
    </svg>
  );
}

const homePath = "M8 1l7.500 6.500H13V14.500H9.800V10H6.200v4.500H3V7.500H.5Z";

const sym = {
  recent: <Sym><circle cx="7.500" cy="7.500" r="6.600" /><path d="M5 5.500l2.500 2.500L11 5" strokeWidth="1.200" /></Sym>,
  home: <Sym><path d={homePath} fill="#4c4c4c" stroke="none" /></Sym>,
  folder: <Sym><path d="M0 .5h6v2h8v2H2V15H0Z" fill="#4c4c4c" stroke="none" /><path d="M3 5.500h13V15H3Z" fill="#4c4c4c" stroke="none" /></Sym>,
  document: <Sym><path d="M3 1.500h6.500L13 5v9.500H3Z" strokeWidth="2" /><path d="M9 1v4.500h4.500Z" fill="#4c4c4c" stroke="none" /></Sym>,
  download: <Sym><path d="M2.500 7.500L8 12.500l5.500-5" strokeWidth="2.200" /><circle cx="8" cy="2.500" r="1.600" fill="#4c4c4c" stroke="none" /><circle cx="8" cy="6.800" r="1.600" fill="#4c4c4c" stroke="none" /></Sym>,
  music: <Sym><circle cx="3.300" cy="11.500" r="2.400" strokeWidth="2" /><circle cx="11.800" cy="11.500" r="2.400" strokeWidth="2" /><path d="M6 12V2h8.500v10" strokeWidth="2" /></Sym>,
  camera: <Sym><path fillRule="evenodd" d="M1 3.500h3.500L6 1.500h4.500L12 3.500h3V14H1ZM8 5.200a3.500 3.500 0 1 0 .01 0Z" fill="#4c4c4c" stroke="none" /><circle cx="8" cy="8.700" r="1.700" fill="#4c4c4c" stroke="none" /></Sym>,
  video: <Sym><path d="M2.500 0v16M13.500 0v16" strokeWidth="3" strokeDasharray="1.500 .8" /><path d="M4 0v16M12 0v16M4 5.500h8M4 11.500h8" strokeWidth="1.200" /></Sym>,
  trash: <Sym><path d="M0 3.500h15M4.500 2.500V1h6v1.500" /><path d="M2 6q-1.200 8 2 8.800h7.200q3-1 2-8.800" /><path d="M5.500 6.500q-1 3.500.5 6M7.500 6.500v6M9.700 6.500q1 3.500-.5 6" strokeWidth="1.100" /></Sym>,
  disk: <Sym><rect x="2" y="1" width="12" height="14" rx="1" strokeWidth="2" /><circle cx="8" cy="7" r="3.700" fill="#4c4c4c" stroke="none" /><path d="M8 7l3.500 5" stroke="#e6e5e4" strokeWidth="2.500" /><path d="M9 8.500l3 4" strokeWidth="1.300" /></Sym>,
  network: <Sym><rect x="1" y="4.500" width="8.500" height="6" strokeWidth="2" /><path d="M5.500 11v2.500M1.500 14h8M8 1.500h7v6.500h-2.500M12.500 8v3.500M11 11.500h4" strokeWidth="2" /></Sym>,
  server: <Sym><rect x="3" y="1" width="8.500" height="9.500" rx="1" strokeWidth="2" /><path d="M6 4h3" strokeWidth="1" /><path d="M7.200 11v3M0 14.500h14" strokeWidth="2" /></Sym>,
};

const places: [string, [keyof typeof sym, string][]][] = [
  ["Places", [["recent", "Recent"], ["home", "Home"], ["folder", "Desktop"], ["document", "Documents"], ["download", "Downloads"], ["music", "Music"], ["camera", "Pictures"], ["video", "Videos"], ["trash", "Trash"]]],
  ["Devices", [["disk", "Computer"]]],
  ["Bookmarks", [["folder", "current"]]],
  ["Network", [["network", "Browse Network"], ["server", "Connect to Server"]]],
];

const files: [string, string][] = [
  ["edit.html.erb", "<h1>E\n\n<%= r"],
  ["_form.html.erb", "<%= f\n  <%\n    <"],
  ["index.html.erb", "<h1>L\n\n<tabl\n  <th"],
  ["index.json.jbuilder", "json.\n  jso\n  jso\nend"],
  ["new.html.erb", "<h1>N\n\n<%= r"],
  ["show.html.erb", "<p id\n\n<p>\n  <st"],
  ["show.json.jbuilder", "json."],
];

const crumbs: [string, string][] = [
  ["Home", "w-[69px]"], ["rick", "w-[37px]"], ["Projects", "w-[68px]"], ["practice", "w-[67px]"],
  ["tiny_editor", "w-[86px]"], ["app", "w-[38px]"], ["views", "w-[49px]"],
];

function HeaderButton({ label, className, children }: { label: string; className: string } & Kids) {
  return (
    <button type="button" aria-label={label} className={`flex h-8 items-center justify-center ${className}`}>
      {children}
    </button>
  );
}

function FilesHeader() {
  return (
    <header className="flex h-10 shrink-0 items-center justify-between bg-linear-to-b from-[#2a2926] via-[#3c3b37] via-20% to-[#3c3b37] px-[3px] text-[14px] text-[#b5b2a5]">
      <div className="flex items-center">
        <div className="flex overflow-hidden rounded-sm ring-1 ring-[#34332f]">
          <HeaderButton label="Back" className="w-[34px] border-r border-[#33322e] bg-[#45443f]">
            <svg width="9" height="13" viewBox="0 0 9 13" fill="none" stroke="#dfdbd2" strokeWidth="2" aria-hidden="true"><path d="M8 1L2 6.500 8 12" /></svg>
          </HeaderButton>
          <HeaderButton label="Forward" className="w-9">
            <svg width="9" height="13" viewBox="0 0 9 13" fill="none" stroke="#8e8c84" strokeWidth="2" aria-hidden="true"><path d="M1 1l6 5.500L1 12" /></svg>
          </HeaderButton>
        </div>
        <div className="ml-4 flex overflow-hidden rounded-sm ring-1 ring-[#34332f]">
          {crumbs.map(([name, width]) => (
            <button key={name} type="button" className={`flex h-8 items-center justify-center gap-1 border-r border-[#54524b] whitespace-nowrap ${width}`}>
              {name === "Home" && (
                <svg width="15" height="14" viewBox="0 1 16 14" fill="#b5b2a5" aria-hidden="true"><path d={homePath} /></svg>
              )}
              {name}
            </button>
          ))}
          <button type="button" className="h-8 w-[50px] bg-[#33322f] font-bold">posts</button>
        </div>
      </div>
      <div className="flex items-center">
        <HeaderButton label="Search" className="w-[34px] rounded-sm border border-[#34332f]">
          <svg width="15" height="15" viewBox="0 0 15 15" fill="none" stroke="#b5b2a5" aria-hidden="true">
            <circle cx="6" cy="6" r="4.600" strokeWidth="2" /><path d="M9.500 9.500l4.500 4.500" strokeWidth="2.400" />
          </svg>
        </HeaderButton>
        <div className="ml-4 flex overflow-hidden rounded-sm bg-[#45443f]">
          <HeaderButton label="List view" className="w-[34px]">
            <svg width="10" height="11" viewBox="0 0 10 11" stroke="#c9c6ba" strokeWidth="2" aria-hidden="true"><path d="M0 1.500h10M0 5.500h10M0 9.500h10" /></svg>
          </HeaderButton>
          <HeaderButton label="Icon view" className="w-[37px] bg-[#33322f]">
            <svg width="10" height="10" viewBox="0 0 10 10" stroke="#a8a69b" strokeWidth="2" strokeDasharray="2 2" aria-hidden="true"><path d="M0 1h10M0 5h10M0 9h10" /></svg>
          </HeaderButton>
          <HeaderButton label="View options" className="w-[35px]">
            <svg width="13" height="9" viewBox="0 0 13 9" fill="none" stroke="#b5b2a5" strokeWidth="2" aria-hidden="true"><path d="M1 1l5.500 6L12 1" /></svg>
          </HeaderButton>
        </div>
        <HeaderButton label="Settings" className="ml-4 w-[34px] rounded-sm border border-[#34332f]">
          <Gear size={15} color="#b5b2a5" />
        </HeaderButton>
      </div>
    </header>
  );
}

function FileIcon({ preview }: { preview: string }) {
  return (
    <div className="relative h-[45px] w-9 border border-[#b5b5b5] border-b-[#9c9c9c] bg-linear-to-b from-[#f6f6f6] to-[#d9d9d9] [clip-path:polygon(0_0,70%_0,100%_24%,100%_100%,0_100%)]">
      <pre className="overflow-hidden pt-1 pl-0.5 font-['DejaVu_Sans_Mono',monospace] text-[8px] leading-[10px] text-[#555]">{preview}</pre>
      <svg width="12" height="12" viewBox="0 0 12 12" className="absolute -top-px -right-px" aria-hidden="true">
        <path d="M0 0Q3 4 1.500 8.500 7 7.500 12 11Z" fill="#fff" fillOpacity=".8" stroke="#b0b0b0" strokeWidth=".8" />
      </svg>
    </div>
  );
}

function FileManager() {
  return (
    <section className="flex min-w-0 flex-1 flex-col">
      <FilesHeader />
      <div className="flex flex-1 border-t border-b border-[#d3d1ce] bg-[#f2f1f0] text-[14px] text-[#6b6a69]">
        <aside className="relative w-[191px] shrink-0 border-r border-[#d0cecb] bg-[#e6e5e4]">
          {places.map(([title, items]) => (
            <div key={title}>
              <h2 className="flex h-[31px] items-center pl-4 font-bold">{title}</h2>
              <ul>
                {items.map(([icon, name]) => (
                  <li key={name}>
                    <a href="#place" className="flex h-[25px] items-center gap-1 pl-6 whitespace-nowrap">
                      {sym[icon]}
                      {name}
                    </a>
                  </li>
                ))}
              </ul>
            </div>
          ))}
          <span className="absolute top-[336px] right-0 h-8 border-r-2 border-dotted border-[#f8f8f7]" />
        </aside>
        <div className="flex min-w-0 flex-1 flex-wrap content-start pt-2 pl-1">
          {files.map(([name, preview]) => (
            <button key={name} type="button" className="flex w-[155px] flex-col items-center leading-6 whitespace-nowrap">
              <span className="block text-left"><FileIcon preview={preview} /></span>
              {name}
            </button>
          ))}
        </div>
      </div>
    </section>
  );
}

export default function App() {
  return (
    <div className="grid min-h-screen grid-cols-[1920fr_1366fr] bg-black font-['Noto_Sans','Open_Sans',sans-serif]">
      <Browser />
      <div className="flex min-w-0 flex-col pt-[312px]">
        <Panel />
        <div className="flex flex-1">
          <Launcher />
          <FileManager />
        </div>
      </div>
    </div>
  );
}
